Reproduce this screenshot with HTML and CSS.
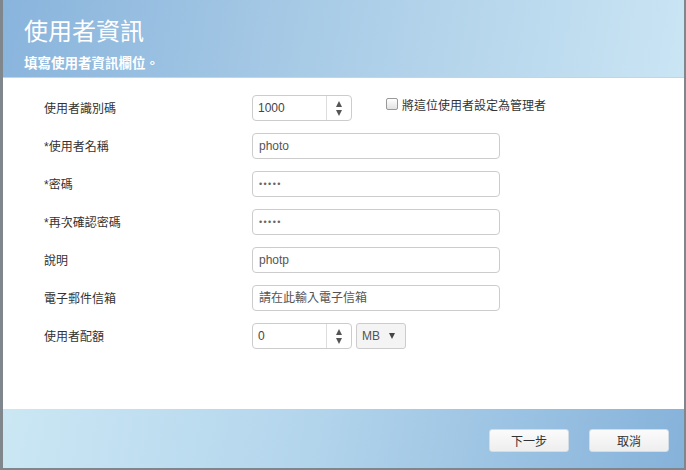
FILE: index.html
```html
<!DOCTYPE html>
<html lang="zh-Hant">
<head>
<meta charset="utf-8">
<link rel="stylesheet" href="styles.css">
</head>
<body>
<div class="dialog">
  <div class="header">
    <div class="title">使用者資訊</div>
    <div class="subtitle">填寫使用者資訊欄位。</div>
  </div>
  <div class="body">
    <div class="row">
      <div class="label">使用者識別碼</div>
      <div class="controls">
        <div class="spin">
          <span class="spin-val">1000</span>
          <span class="spin-btn"><span class="up"></span><span class="down"></span></span>
        </div>
        <label class="check"><span class="box"></span>將這位使用者設定為管理者</label>
      </div>
    </div>
    <div class="row">
      <div class="label">*使用者名稱</div>
      <div class="controls"><div class="input">photo</div></div>
    </div>
    <div class="row">
      <div class="label">*密碼</div>
      <div class="controls"><div class="input pw">•••••</div></div>
    </div>
    <div class="row">
      <div class="label">*再次確認密碼</div>
      <div class="controls"><div class="input pw">•••••</div></div>
    </div>
    <div class="row">
      <div class="label">說明</div>
      <div class="controls"><div class="input">photp</div></div>
    </div>
    <div class="row">
      <div class="label">電子郵件信箱</div>
      <div class="controls"><div class="input">請在此輸入電子信箱</div></div>
    </div>
    <div class="row">
      <div class="label">使用者配額</div>
      <div class="controls">
        <div class="spin">
          <span class="spin-val">0</span>
          <span class="spin-btn"><span class="up"></span><span class="down"></span></span>
        </div>
        <div class="select">MB<span class="caret"></span></div>
      </div>
    </div>
  </div>
  <div class="footer">
    <button class="btn">下一步</button>
    <button class="btn">取消</button>
  </div>
</div>
</body>
</html>
```

FILE: styles.css
```css
html, body {
  margin: 0;
  padding: 0;
}
body {
  width: 686px;
  height: 470px;
  background: #7f868c;
  font-family: "Liberation Sans", "Noto Sans CJK TC", sans-serif;
  overflow: hidden;
}
.dialog {
  margin-left: 3px;
  width: 681px;
  height: 468px;
  display: flex;
  flex-direction: column;
  background: #fff;
}
.header {
  height: 78px;
  box-sizing: border-box;
  border-bottom: 1px solid #c9d3dc;
  background: linear-gradient(100deg, #89b4dc 0%, #a8cbe6 45%, #cae5f4 100%);
  padding: 17px 0 0 21px;
  color: #fff;
}
.title {
  font-size: 24px;
  line-height: 30px;
}
.subtitle {
  font-size: 13.5px;
  font-weight: bold;
  line-height: 18px;
  margin-top: 8px;
}
.body {
  flex: 1;
  padding: 17px 0 0 41px;
  display: flex;
  flex-direction: column;
  gap: 12px;
}
.row {
  display: flex;
  align-items: center;
  height: 26px;
}
.label {
  width: 208px;
  font-size: 12px;
  color: #333;
  margin-top: -2px;
}
.controls {
  display: flex;
  align-items: center;
}
.input {
  width: 248px;
  height: 26px;
  box-sizing: border-box;
  border: 1px solid #ccc;
  border-radius: 4px;
  padding-left: 6px;
  font-size: 12px;
  line-height: 24px;
  color: #555;
}
.input.pw {
  font-size: 9px;
  letter-spacing: 1.4px;
  color: #666;
}
.spin {
  width: 100px;
  height: 26px;
  box-sizing: border-box;
  border: 1px solid #ccc;
  border-radius: 4px;
  display: flex;
}
.spin-val {
  flex: 1;
  padding-left: 5px;
  font-size: 12px;
  line-height: 24px;
  color: #444;
}
.spin-btn {
  width: 24px;
  border-left: 1px solid #ddd;
  display: flex;
  flex-direction: column;
  align-items: center;
  justify-content: center;
  gap: 3px;
}
.up {
  width: 0; height: 0;
  border-left: 3.5px solid transparent;
  border-right: 3.5px solid transparent;
  border-bottom: 6px solid #555;
}
.down {
  width: 0; height: 0;
  border-left: 3.5px solid transparent;
  border-right: 3.5px solid transparent;
  border-top: 6px solid #555;
}
.check {
  display: flex;
  align-items: center;
  margin-left: 34px;
  margin-top: -8px;
  font-size: 12px;
  color: #333;
}
.box {
  width: 10px;
  height: 10px;
  border: 1px solid #999;
  border-radius: 2px;
  background: linear-gradient(#fff, #e2e2e2);
  margin-right: 4px;
}
.select {
  margin-left: 4px;
  width: 50px;
  height: 26px;
  box-sizing: border-box;
  border: 1px solid #ccc;
  border-radius: 3px;
  background: #f4f4f4;
  font-size: 12px;
  color: #555;
  line-height: 24px;
  padding-left: 5px;
  display: flex;
  align-items: center;
  gap: 9px;
}
.caret {
  width: 0; height: 0;
  border-left: 3.5px solid transparent;
  border-right: 3.5px solid transparent;
  border-top: 6px solid #444;
}
.footer {
  height: 59px;
  box-sizing: border-box;
  background: linear-gradient(100deg, #cbe7f4 0%, #b3d5ec 45%, #86b2da 100%);
  display: flex;
  justify-content: flex-end;
  align-items: flex-start;
  padding: 20px 15px 0 0;
  gap: 20px;
}
.btn {
  width: 80px;
  height: 23px;
  border: 1px solid #d4dde6;
  border-radius: 3px;
  background: linear-gradient(#fbfbfb, #eeeeee);
  font-family: "Liberation Sans", "Noto Sans CJK TC", sans-serif;
  font-size: 12px;
  color: #333;
  padding: 0;
}
```
